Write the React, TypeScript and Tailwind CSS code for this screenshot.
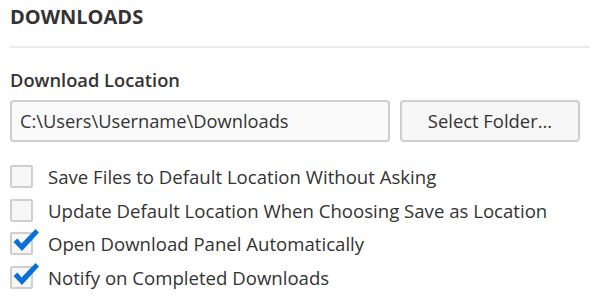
import React from "react";

const font = { fontFamily: '"Open Sans", "Noto Sans", sans-serif' };

function Check() {
  return (
    <svg
      className="absolute left-0 top-[-4px]"
      width="30"
      height="27"
      viewBox="0 0 30 27"
    >
      <path
        d="M3.5 14 L7.5 10.5 L11.5 15.5 L25.5 1 L29 4.5 L12 23 Z"
        fill="#0a6fd6"
      />
    </svg>
  );
}

function Row({ label, checked }: { label: string; checked: boolean }) {
  return (
    <div className="flex items-center h-[23px]">
      <div className="relative w-[23px] h-[23px] shrink-0">
        <div className="w-[23px] h-[23px] border-2 border-[#cfcfcf] bg-[#f7f7f7] rounded-[2px]" />
        {checked && <Check />}
      </div>
      <span className="ml-[15px] text-[18.6px] leading-[23px] text-[#333]">{label}</span>
    </div>
  );
}

export default function App() {
  return (
    <div className="w-[590px] h-[301px] bg-white overflow-hidden pl-[10px]" style={font}>
      <div className="pt-[3px] h-[46px] text-[20px] font-bold text-[#333] leading-[27px]">
        DOWNLOADS
      </div>
      <div className="h-[2px] bg-[#ebebeb]" />
      <div className="mt-[20px] text-[18.3px] font-semibold text-[#333] leading-[24px]">
        Download Location
      </div>
      <div className="mt-[8px] flex gap-[10px]">
        <div className="w-[380px] h-[42px] border-2 border-[#cfcfcf] rounded-[4px] bg-[#fafafa] flex items-center px-[8px] text-[18.3px] text-[#333]">
          C:\Users\Username\Downloads
        </div>
        <div className="w-[180px] h-[42px] border-2 border-[#cfcfcf] rounded-[4px] bg-[#f7f7f7] flex items-center justify-center text-[18.4px] text-[#333]">
          Select Folder...
        </div>
      </div>
      <div className="mt-[23px] flex flex-col gap-[10.7px]">
        <Row label="Save Files to Default Location Without Asking" checked={false} />
        <Row label="Update Default Location When Choosing Save as Location" checked={false} />
        <Row label="Open Download Panel Automatically" checked={true} />
        <Row label="Notify on Completed Downloads" checked={true} />
      </div>
    </div>
  );
}
